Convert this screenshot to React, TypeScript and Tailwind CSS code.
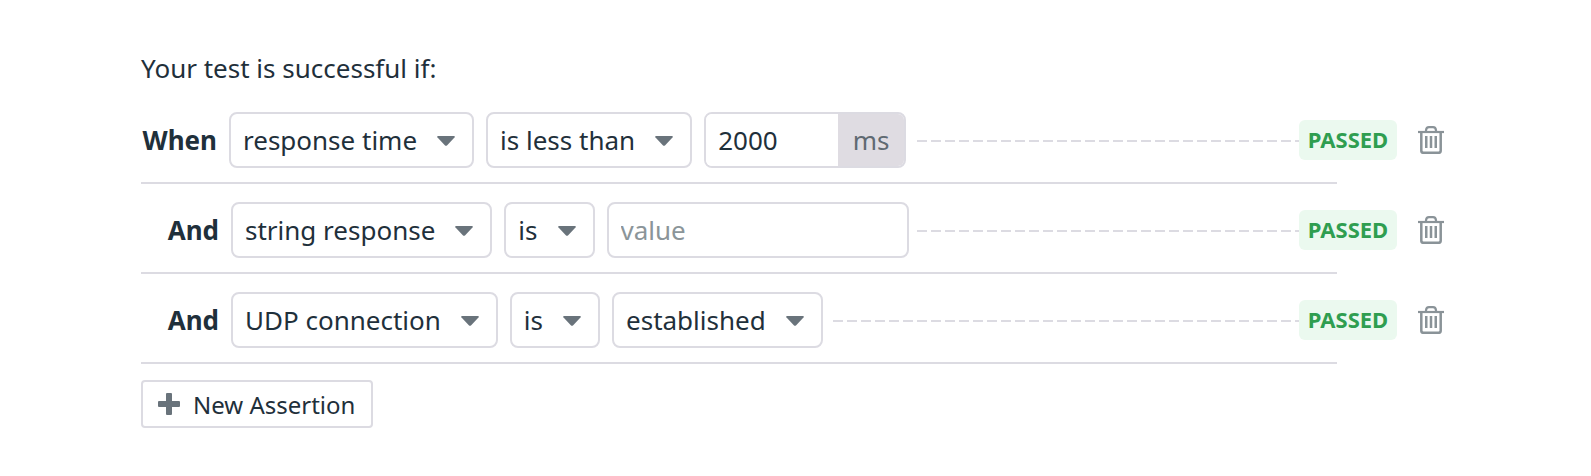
import type { ReactNode } from "react";

function Caret() {
  return (
    <svg
      viewBox="0 0 18 10"
      className="pointer-events-none absolute top-6 right-[19px] h-[10px] w-[18px]"
      aria-hidden="true"
    >
      <path
        d="M1 0H17Q18.3 .3 17.5 1.4L10.2 9.3Q9 10.4 7.8 9.3L.5 1.4Q-.3 .3 1 0Z"
        fill="#69737b"
      />
    </svg>
  );
}

function SelectBox({ label, options }: { label: string; options: string[] }) {
  return (
    <div className="relative shrink-0">
      <select
        aria-label={label}
        className="field-sizing-content block h-14 appearance-none rounded-lg border-2 border-[#dcdbe2] bg-white pr-[55px] pl-3 text-[26px] leading-9 text-[#1f303b]"
      >
        {options.map((option) => (
          <option key={option}>{option}</option>
        ))}
      </select>
      <Caret />
    </div>
  );
}

function TrashIcon() {
  return (
    <svg
      viewBox="0 0 26 28"
      className="h-7 w-[26px]"
      fill="none"
      stroke="#8a9398"
      aria-hidden="true"
    >
      <path strokeWidth="2.2" d="M0 6H26" />
      <path strokeWidth="2.2" d="M8 6V4.500Q8.200 1.100 11 1.100H15Q17.800 1.100 18 4.500V6" />
      <path
        strokeWidth="2.500"
        d="M3.300 6V24.500Q3.300 26.800 5.500 26.800H20.500Q22.700 26.800 22.700 24.500V6"
      />
      <path strokeWidth="2.500" d="M8.250 10V22M13 10V22M17.750 10V22" />
    </svg>
  );
}

function Assertion({
  label,
  labelWidth,
  children,
}: {
  label: string;
  labelWidth: string;
  children: ReactNode;
}) {
  return (
    <li>
      <div className="flex items-center">
        <span className={`${labelWidth} mr-3 shrink-0 text-right font-bold`}>{label}</span>
        <div className="flex shrink-0 gap-3">{children}</div>
        <div className="mt-[2px] ml-2 h-[2px] min-w-0 flex-1 bg-[repeating-linear-gradient(to_left,#dcdbe2_0px,#dcdbe2_4px,transparent_4px,transparent_8px,#dcdbe2_8px,#dcdbe2_14px)]" />
        <span className="flex h-10 w-[98px] shrink-0 items-center justify-center rounded-md bg-[#ebf9ef] pb-[2px] text-[22px] font-bold text-[#2f9e50]">
          PASSED
        </span>
        <button type="button" aria-label="Delete assertion" className="ml-[21px] shrink-0">
          <TrashIcon />
        </button>
      </div>
      <div className="mt-[14px] mr-[107px] h-[2px] bg-[#dcdbe2]" />
    </li>
  );
}

export default function App() {
  return (
    <main className="bg-white pt-[50px] pr-[147px] pb-12 pl-[141px] font-['Noto_Sans',sans-serif] text-[26px] leading-9 text-[#1f303b]">
      <h1>Your test is successful if:</h1>
      <ul className="mt-[26px] flex flex-col gap-[18px]">
        <Assertion label="When" labelWidth="w-[76px]">
          <SelectBox label="Metric" options={["response time", "string response", "UDP connection"]} />
          <SelectBox label="Comparison" options={["is less than", "is"]} />
          <div className="flex h-14 w-[202px] overflow-hidden rounded-lg border-2 border-[#dcdbe2]">
            <input
              aria-label="Response time in milliseconds"
              defaultValue="2000"
              className="min-w-0 flex-1 bg-white pl-3"
            />
            <span className="flex w-[66px] items-center justify-center bg-[#dfdce2] text-[#5f6a72]">
              ms
            </span>
          </div>
        </Assertion>
        <Assertion label="And" labelWidth="w-[78px]">
          <SelectBox label="Metric" options={["string response", "response time", "UDP connection"]} />
          <SelectBox label="Comparison" options={["is", "is less than"]} />
          <input
            aria-label="Expected value"
            placeholder="value"
            className="h-14 w-[302px] rounded-lg border-2 border-[#dcdbe2] bg-white pl-3 placeholder:text-[#8b9599]"
          />
        </Assertion>
        <Assertion label="And" labelWidth="w-[78px]">
          <SelectBox label="Metric" options={["UDP connection", "response time", "string response"]} />
          <SelectBox label="Comparison" options={["is", "is less than"]} />
          <SelectBox label="Connection state" options={["established", "closed"]} />
        </Assertion>
      </ul>
      <button
        type="button"
        className="mt-4 flex h-12 items-center rounded border-2 border-[#dcdbe2] bg-white pt-[2px] pr-4 pl-[15px] text-2xl"
      >
        <svg viewBox="0 0 22 22" className="mr-[13px] mb-[2px] h-[22px] w-[22px]" fill="#69737b" aria-hidden="true">
          <path d="M9 0H13Q14 0 14 1V8H21Q22 8 22 9V13Q22 14 21 14H14V21Q14 22 13 22H9Q8 22 8 21V14H1Q0 14 0 13V9Q0 8 1 8H8V1Q8 0 9 0Z" />
        </svg>
        New Assertion
      </button>
    </main>
  );
}
